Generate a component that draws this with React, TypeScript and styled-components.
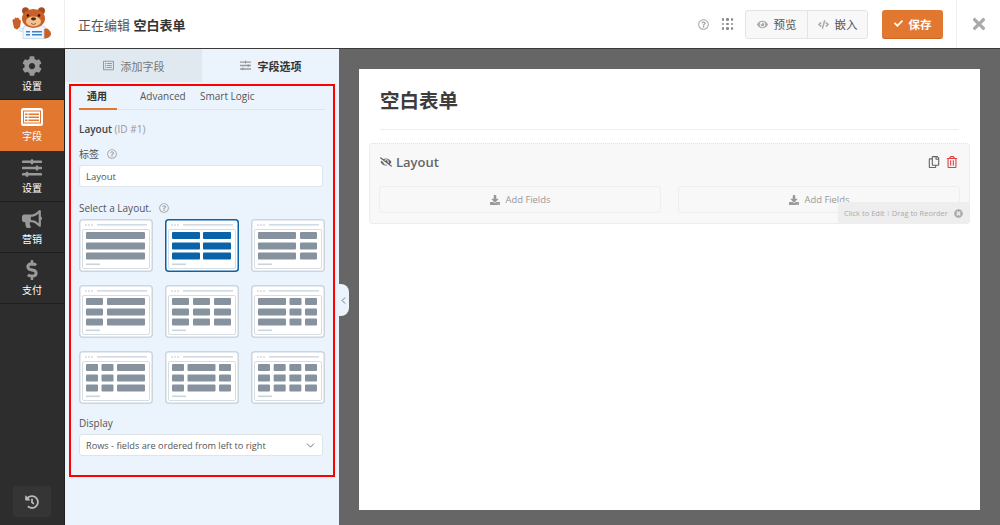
import React from "react";
import styled, { createGlobalStyle } from "styled-components";
import {
  FaCog, FaSlidersH, FaBullhorn, FaDollarSign, FaHistory, FaRegQuestionCircle, FaEye, FaCode,
  FaCheck, FaTimes, FaEyeSlash, FaRegCopy, FaRegTrashAlt, FaDownload, FaTimesCircle, FaRegListAlt,
} from "react-icons/fa";
import { ChevronDown, ChevronLeft } from "lucide-react";

const Global = createGlobalStyle`
  html, body { margin: 0; padding: 0; }
  body { font-family: "Open Sans", "Noto Sans CJK SC", sans-serif; background: #666; }
  * { box-sizing: border-box; }
`;

const Page = styled.div`
  width: 1000px;
  height: 525px;
  overflow: hidden;
  display: flex;
  flex-direction: column;
`;

const Header = styled.header`
  height: 49px;
  flex: none;
  display: flex;
  align-items: center;
  background: #fff;
  border-bottom: 1px solid #3a3a3a;
`;

const LogoCell = styled.div`
  width: 65px;
  height: 48px;
  display: flex;
  align-items: center;
  justify-content: center;
  border-right: 1px solid #eee;
`;

const Title = styled.div`
  margin-left: 13px;
  font-size: 13px;
  color: #555;
  flex: 1;
  b { color: #333; font-weight: 700; }
`;

const HeaderIcon = styled.span`
  display: flex;
  color: #aaa;
  font-size: 11px;
  margin-right: 13px;
`;

const DotGrid = styled.span`
  display: grid;
  grid-template-columns: repeat(3, 2.5px);
  gap: 2px;
  margin-right: 12px;
  i { width: 2.5px; height: 2.5px; border-radius: 50%; background: #888; }
`;

const BtnGroup = styled.div`
  width: 123px;
  height: 29px;
  display: flex;
  background: #f8f8f8;
  border: 1px solid #e4e4e4;
  border-radius: 3px;
  margin-right: 14px;
`;

const GroupBtn = styled.div<{ $w: number }>`
  width: ${(p) => p.$w}px;
  display: flex;
  align-items: center;
  justify-content: center;
  gap: 6px;
  font-size: 11.5px;
  color: #555;
  svg { color: #aaa; font-size: 11px; }
  & + & { border-left: 1px solid #e4e4e4; }
`;

const SaveBtn = styled.div`
  width: 61px;
  height: 29px;
  display: flex;
  align-items: center;
  justify-content: center;
  gap: 6px;
  background: #e27730;
  border-bottom: 1px solid #cd6622;
  border-radius: 3px;
  color: #fff;
  font-size: 11.5px;
  font-weight: 700;
  margin-right: 13px;
  svg { font-size: 9px; }
`;

const CloseCell = styled.div`
  width: 44px;
  height: 48px;
  display: flex;
  align-items: center;
  justify-content: center;
  border-left: 1px solid #eee;
  color: #aaa;
  font-size: 18px;
`;

const Body = styled.div`
  flex: 1;
  display: flex;
  min-height: 0;
`;

const Sidebar = styled.nav`
  width: 65px;
  flex: none;
  display: flex;
  flex-direction: column;
  background: #2d2d2d;
  border-right: 1px solid #1f1f1f;
`;

const NavItem = styled.div<{ $active?: boolean }>`
  height: 51px;
  display: flex;
  flex-direction: column;
  align-items: center;
  justify-content: center;
  gap: 3px;
  color: #fff;
  font-size: 10px;
  line-height: 14px;
  background: ${(p) => (p.$active ? "#e27730" : "transparent")};
  border-bottom: 1px solid ${(p) => (p.$active ? "#e27730" : "#1f1f1f")};
  svg { font-size: 20px; color: #999; }
`;

const HistoryBtn = styled.div`
  margin: auto 13px 8px;
  height: 31px;
  border-radius: 3px;
  background: #353535;
  display: flex;
  align-items: center;
  justify-content: center;
  color: #bbb;
  font-size: 14px;
`;

const Panel = styled.aside`
  width: 274px;
  flex: none;
  position: relative;
  background: #ebf3fc;
`;

const PanelTabs = styled.div`
  height: 33px;
  display: flex;
  margin-bottom: 2px;
`;

const PanelTab = styled.div<{ $active?: boolean }>`
  flex: 1;
  display: flex;
  align-items: center;
  justify-content: center;
  gap: 7px;
  font-size: 11px;
  color: ${(p) => (p.$active ? "#333" : "#777")};
  font-weight: ${(p) => (p.$active ? 600 : 400)};
  background: ${(p) => (p.$active ? "#ebf3fc" : "#e0e8f0")};
  svg { color: #999; font-size: 11px; }
`;

const Options = styled.div`
  margin: 0 4px;
  width: 266px;
  height: 393px;
  border: 2px solid #f00;
  padding: 0 8px;
`;

const SubTabs = styled.div`
  height: 24px;
  display: flex;
  border-bottom: 1px solid #dde5ec;
  width: 246px;
`;

const SubTab = styled.div<{ $active?: boolean; $w: number }>`
  width: ${(p) => p.$w}px;
  height: 24px;
  padding-left: ${(p) => (p.$active ? 8 : 0)}px;
  font-size: 10px;
  line-height: 20px;
  color: ${(p) => (p.$active ? "#333" : "#555")};
  font-weight: ${(p) => (p.$active ? 600 : 400)};
  border-bottom: ${(p) => (p.$active ? "2px solid #e27730" : "none")};
`;

const FieldName = styled.div`
  margin-top: 11px;
  font-size: 10px;
  line-height: 16px;
  font-weight: 600;
  color: #444;
  span { color: #999; font-weight: 400; }
`;

const Label = styled.div<{ $top: number }>`
  margin-top: ${(p) => p.$top}px;
  font-size: 10px;
  line-height: 14px;
  color: #555;
  display: flex;
  align-items: center;
  gap: 8px;
  svg { color: #aaa; font-size: 10px; }
`;

const TextBox = styled.div`
  margin-top: 4px;
  width: 244px;
  height: 22px;
  background: #fff;
  border: 1px solid #dfe4e8;
  border-radius: 3px;
  padding-left: 6px;
  font-size: 9.5px;
  line-height: 22px;
  color: #555;
`;

const LayoutGrid = styled.div`
  margin-top: 4px;
  display: grid;
  grid-template-columns: repeat(3, 74px);
  column-gap: 12px;
  row-gap: 13px;
`;

const SelectBox = styled(TextBox)`
  display: flex;
  justify-content: space-between;
  align-items: center;
  padding: 1px 5px 0 6px;
  font-size: 9.2px;
  svg { color: #555; }
`;

const Handle = styled.div`
  position: absolute;
  right: -10px;
  top: 235px;
  width: 11px;
  height: 32px;
  background: #ebf3fc;
  border-radius: 0 8px 8px 0;
  display: flex;
  align-items: center;
  justify-content: center;
  color: #444;
`;

const Preview = styled.main`
  flex: 1;
  background: #666;
  padding: 20px 20px 15px;
`;

const FormCard = styled.section`
  width: 621px;
  height: 441px;
  background: #fff;
  padding: 17px 10px 0;
`;

const FormTitle = styled.h1`
  margin: 0 11px;
  height: 44px;
  font-size: 19.5px;
  line-height: 30px;
  font-weight: 700;
  color: #3d3d3d;
  border-bottom: 1px solid #eee;
`;

const FieldBox = styled.div`
  position: relative;
  margin-top: 13px;
  height: 81px;
  background: #f8f8f8;
  border: 1px dotted #e2e2e2;
  border-radius: 4px;
  padding: 0 9px;
`;

const FieldHead = styled.div`
  height: 36px;
  margin-bottom: 6px;
  display: flex;
  align-items: center;
  gap: 4px;
  padding-left: 1px;
  font-size: 13px;
  font-weight: 600;
  color: #666;
  svg { font-size: 12px; color: #666; }
`;

const FieldActions = styled.div`
  margin-left: auto;
  margin-right: 2px;
  display: flex;
  gap: 6px;
  svg { font-size: 12px; }
  svg:last-child { color: #e04040; }
`;

const Slots = styled.div`
  display: flex;
  gap: 17px;
`;

const Slot = styled.div`
  width: 282px;
  height: 27px;
  border: 1px solid #eee;
  border-radius: 3px;
  display: flex;
  align-items: center;
  justify-content: center;
  gap: 6px;
  font-size: 9.4px;
  color: #999;
  svg { font-size: 10px; color: #999; }
`;

const Tip = styled.div`
  position: absolute;
  right: -1px;
  bottom: -1px;
  width: 132px;
  height: 22px;
  background: #eeeeee;
  border-radius: 0 0 4px 0;
  display: flex;
  align-items: center;
  padding: 0 7px 0 6px;
  font-size: 7.5px;
  color: #aaa;
  white-space: nowrap;
  svg { margin-left: auto; font-size: 9px; color: #aaa; }
  i { margin: 0 2px; font-style: normal; font-size: 6px; }
`;

const Logo = () => (
  <svg width="40" height="34" viewBox="0 0 40 34">
    <path d="M9 21l-2 3 4 1 3-3z" fill="#eaf3fb" stroke="#b9d3ea" strokeWidth=".6" />
    <path d="M2 21 .5 14c-.3-1.5 1-2 1.8-1.400L3 10.500l1.600.5L6 10.500l1.200 1.500 1.800 2-1 6-3 2.500z" fill="#c9602a" />
    <path d="M32 21c4 0 7 3 7 6 0 2.500-3 4.500-7 4.500z" fill="#c9602a" />
    <path d="M12 19h20l1.500 2-1.500 1.500V31.500H11V23z" fill="#f0f6fc" stroke="#b9d3ea" strokeWidth=".7" />
    <circle cx="13.500" cy="3.800" r="3.500" fill="#a94c1e" />
    <circle cx="29.500" cy="3.800" r="3.500" fill="#a94c1e" />
    <ellipse cx="21.500" cy="11.500" rx="11.500" ry="9.500" fill="#c9602a" />
    <ellipse cx="21.500" cy="14.500" rx="7.500" ry="5" fill="#f2c48d" />
    <ellipse cx="21.500" cy="11.800" rx="2.500" ry="1.600" fill="#4a2410" />
    <path d="M19 16.500q2.500 2 5 0" fill="none" stroke="#8a3d16" strokeWidth=".8" />
    <circle cx="16" cy="8.500" r="1.300" fill="#2d1408" />
    <circle cx="27" cy="8.500" r="1.300" fill="#2d1408" />
    <rect x="14" y="24" width="4" height="1.500" fill="#3b83c5" />
    <rect x="20" y="24" width="10" height="1.500" fill="#3b83c5" />
    <rect x="14" y="27" width="4" height="1.500" fill="#3b83c5" />
    <rect x="20" y="27" width="10" height="1.500" fill="#3b83c5" />
  </svg>
);

const FieldsIcon = () => (
  <svg width="22" height="18" viewBox="0 0 22 18">
    <rect width="22" height="18" rx="2.5" fill="#fff" />
    <rect x="2.500" y="3" width="17" height="12" fill="none" stroke="#e27730" strokeWidth="1" />
    {[5.5, 8.5, 11.5].map((y) => (
      <g key={y}>
        <rect x="4" y={y} width="2.5" height="1.5" fill="#e27730" />
        <rect x="7.5" y={y} width="10.5" height="1.5" fill="#e27730" />
      </g>
    ))}
  </svg>
);

const Thumb = ({ cols, active }: { cols: number[]; active?: boolean }) => {
  const fill = active ? "#0a63a8" : "#86929e";
  const gap = cols.length > 1 ? (59 - cols.reduce((a, b) => a + b, 0)) / (cols.length - 1) : 0;
  return (
    <svg width="74" height="53" viewBox="0 0 74 53">
      <rect x=".75" y=".75" width="72.5" height="51.5" rx="3" fill="#fff" stroke={active ? "#0a63a8" : "#ced6dd"} strokeWidth="1.5" />
      <rect x="3.5" y="10.5" width="67" height="39" rx="1.5" fill="none" stroke="#d6dde3" />
      {[7, 10, 13].map((x) => <circle key={x} cx={x} cy="6" r=".8" fill="#b9c2ca" />)}
      <rect x="18" y="5" width="50" height="1.6" fill="#d2dbe3" />
      {[13, 23.5, 33.5].map((y) => {
        let x = 7;
        return cols.map((w, i) => {
          const bar = <rect key={`${y}-${i}`} x={x} y={y} width={w} height="7" rx="1" fill={fill} />;
          x += w + gap;
          return bar;
        });
      })}
      <rect x="7" y="44.5" width="14" height="1.6" fill="#ccd4db" />
    </svg>
  );
};

const thumbs = [
  [59], [28, 28], [38, 17],
  [17, 38], [17, 17, 17], [28, 12, 12],
  [12, 12, 28], [12, 28, 12], [12, 12, 12, 12],
];

const App = () => {
  return (
    <Page>
      <Global />
      <Header>
        <LogoCell><Logo /></LogoCell>
        <Title>正在编辑 <b>空白表单</b></Title>
        <HeaderIcon><FaRegQuestionCircle /></HeaderIcon>
        <DotGrid>{Array.from({ length: 9 }).map((_, i) => <i key={i} />)}</DotGrid>
        <BtnGroup>
          <GroupBtn $w={61}><FaEye />预览</GroupBtn>
          <GroupBtn $w={60}><FaCode />嵌入</GroupBtn>
        </BtnGroup>
        <SaveBtn><FaCheck />保存</SaveBtn>
        <CloseCell><FaTimes /></CloseCell>
      </Header>
      <Body>
        <Sidebar>
          <NavItem><FaCog />设置</NavItem>
          <NavItem $active><FieldsIcon />字段</NavItem>
          <NavItem><FaSlidersH />设置</NavItem>
          <NavItem><FaBullhorn />营销</NavItem>
          <NavItem><FaDollarSign />支付</NavItem>
          <HistoryBtn><FaHistory /></HistoryBtn>
        </Sidebar>
        <Panel>
          <PanelTabs>
            <PanelTab><FaRegListAlt />添加字段</PanelTab>
            <PanelTab $active><FaSlidersH />字段选项</PanelTab>
          </PanelTabs>
          <Options>
            <SubTabs>
              <SubTab $active $w={38}>通用</SubTab>
              <SubTab $w={23} />
              <SubTab $w={60}>Advanced</SubTab>
              <SubTab $w={80}>Smart Logic</SubTab>
            </SubTabs>
            <FieldName>Layout <span>(ID #1)</span></FieldName>
            <Label $top={10}>标签 <FaRegQuestionCircle /></Label>
            <TextBox>Layout</TextBox>
            <Label $top={14}>Select a Layout. <FaRegQuestionCircle /></Label>
            <LayoutGrid>
              {thumbs.map((cols, i) => <Thumb key={i} cols={cols} active={i === 1} />)}
            </LayoutGrid>
            <Label $top={12}>Display</Label>
            <SelectBox>Rows - fields are ordered from left to right <ChevronDown size={13} strokeWidth={1.5} /></SelectBox>
          </Options>
          <Handle><ChevronLeft size={11} strokeWidth={1.5} /></Handle>
        </Panel>
        <Preview>
          <FormCard>
            <FormTitle>空白表单</FormTitle>
            <FieldBox>
              <FieldHead>
                <FaEyeSlash />Layout
                <FieldActions><FaRegCopy /><FaRegTrashAlt /></FieldActions>
              </FieldHead>
              <Slots>
                <Slot><FaDownload />Add Fields</Slot>
                <Slot><FaDownload />Add Fields</Slot>
              </Slots>
              <Tip>Click to Edit<i>|</i>Drag to Reorder<FaTimesCircle /></Tip>
            </FieldBox>
          </FormCard>
        </Preview>
      </Body>
    </Page>
  );
};

export default App;
